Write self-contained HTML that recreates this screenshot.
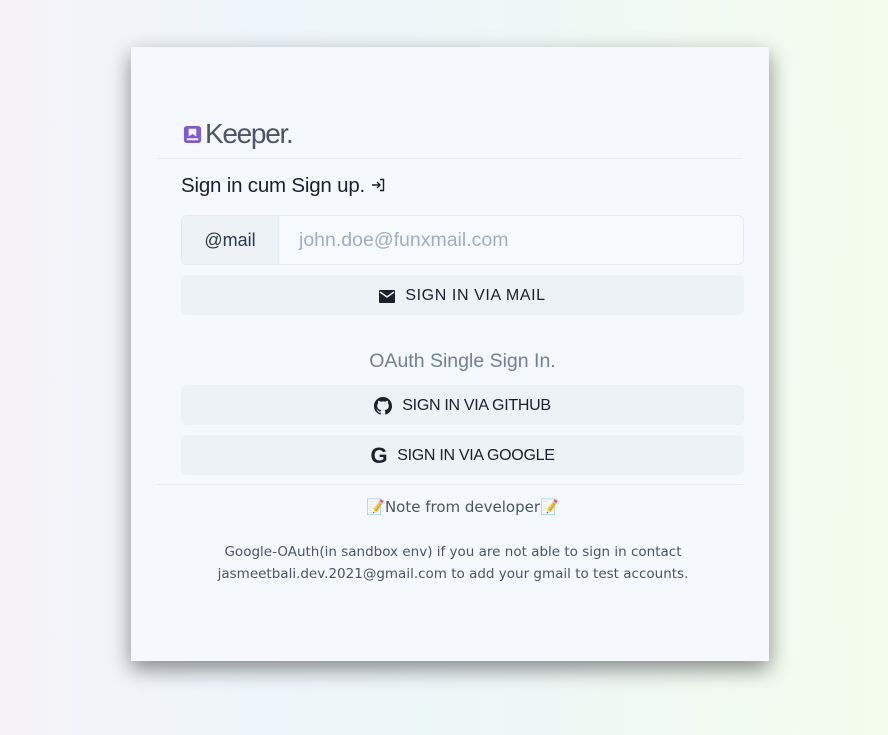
<!DOCTYPE html>
<html><head><meta charset="utf-8"><style>
html,body{margin:0;width:888px;height:735px;overflow:hidden}
body{background:linear-gradient(90deg,#f6f3f8 0%,#ecf5fc 30%,#edf8f6 60%,#f3fdec 100%);font-family:"Liberation Sans",sans-serif;position:relative}
.card{position:absolute;left:131px;top:47px;width:638px;height:614px;background:#f5f8fc;box-shadow:0 8px 20px rgba(0,0,0,.45)}
.logo{position:absolute;left:52px;top:71px;font-size:28px;color:#4a5568;letter-spacing:-1.3px;display:flex;align-items:center}
.hr{position:absolute;left:26px;width:586px;height:1px;background:#e8edf3}
.title{position:absolute;left:50px;top:127px;font-size:20.5px;color:#1a202c;letter-spacing:-.2px}
.input{position:absolute;left:50px;top:168px;width:561px;height:48px;border:1px solid #e4e9f0;border-radius:6px;display:flex;overflow:hidden;background:#f7fafc}
.pre{width:96px;background:#edf2f7;border-right:1px solid #e4e9f0;display:flex;align-items:center;justify-content:center;font-size:18px;color:#2d3748}
.ph{padding-left:20px;display:flex;align-items:center;font-size:19.5px;color:#a0aec0}
.btn{position:absolute;left:50px;width:563px;height:40px;background:#edf2f7;border-radius:6px;display:flex;align-items:center;justify-content:center;font-size:16px;color:#1a202c;gap:10px;padding-top:2px;box-sizing:border-box}
.oauth{position:absolute;left:50px;width:563px;top:303px;text-align:center;font-size:19.5px;color:#718096}
.note{position:absolute;left:50px;width:563px;text-align:center;font-family:"Comic Sans MS","DejaVu Sans",sans-serif;color:#4a5568}
</style></head><body>
<div class="card">
<div class="logo"><svg width="19" height="19" viewBox="0 0 20 20" style="margin-right:3px"><rect x="1" y="1" width="18" height="18" rx="3" fill="#805ad5"/><path d="M6 4h8v8l-4-2.5L6 12z" fill="#f5f8fc"/><rect x="4" y="14" width="12" height="2" fill="#f5f8fc"/></svg>Keeper.</div>
<div class="hr" style="top:111px"></div>
<div class="title">Sign in cum Sign up. <svg width="14" height="14" viewBox="0 0 14 14" fill="none" stroke="#1a202c" stroke-width="1.4"><path d="M1 7h8M6 4l3 3-3 3M9 1.5h3.5v11H9"/></svg></div>
<div class="input"><div class="pre">@mail</div><div class="ph">john.doe@funxmail.com</div></div>
<div class="btn" style="top:228px;letter-spacing:.6px"><svg width="16" height="13" viewBox="0 0 16 13"><rect width="16" height="13" rx="1" fill="#1a202c"/><path d="M1 2l7 5 7-5" stroke="#edf2f7" stroke-width="1.5" fill="none"/></svg>SIGN IN VIA MAIL</div>
<div class="oauth">OAuth Single Sign In.</div>
<div class="btn" style="top:338px;letter-spacing:-.3px"><svg width="18" height="18" viewBox="0 0 16 16"><path fill="#1a202c" d="M8 0C3.58 0 0 3.58 0 8c0 3.54 2.29 6.53 5.47 7.59.4.07.55-.17.55-.38v-1.33c-2.23.48-2.7-1.07-2.7-1.07-.36-.92-.89-1.17-.89-1.17-.73-.5.05-.49.05-.49.8.06 1.23.83 1.23.83.71 1.23 1.87.87 2.33.66.07-.52.28-.87.51-1.07-1.78-.2-3.64-.89-3.64-3.95 0-.87.31-1.59.82-2.15-.08-.2-.36-1.02.08-2.12 0 0 .67-.21 2.2.82a7.6 7.6 0 014 0c1.53-1.04 2.2-.82 2.2-.82.44 1.1.16 1.92.08 2.12.51.56.82 1.27.82 2.15 0 3.07-1.87 3.75-3.65 3.95.29.25.54.73.54 1.48v2.2c0 .21.15.46.55.38A8 8 0 0016 8c0-4.42-3.58-8-8-8z"/></svg>SIGN IN VIA GITHUB</div>
<div class="btn" style="top:388px;letter-spacing:-.3px"><span style="font-weight:bold;font-size:22px">G</span>SIGN IN VIA GOOGLE</div>
<div class="hr" style="top:437px"></div>
<div class="note" style="top:451px;font-size:15px">📝Note from developer📝</div>
<div class="note" style="top:494px;font-size:13.5px;line-height:22px;left:0;width:638px;margin-left:3px">Google-OAuth(in sandbox env) if you are not able to sign in contact<br>jasmeetbali.dev.2021@gmail.com to add your gmail to test accounts.</div>
</div>
</body></html>
